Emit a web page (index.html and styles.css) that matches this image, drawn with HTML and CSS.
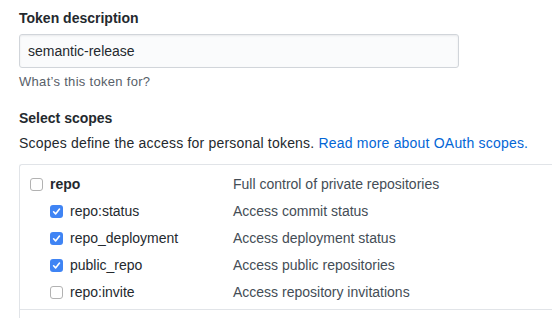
FILE: index.html
```html
<!DOCTYPE html>
<html lang="en">
<head>
<meta charset="UTF-8">
<meta name="viewport" content="width=device-width, initial-scale=1.0">
<title>New personal access token</title>
<link rel="stylesheet" href="styles.css">
</head>
<body>
<form class="token-form">
<div class="form-group">
<label class="form-label" for="tokenDescription">Token description</label>
<input id="tokenDescription" class="form-control" type="text" value="semantic-release">
<p class="note">What’s this token for?</p>
</div>

<div class="form-group">
<div class="form-label">Select scopes</div>
<p class="scopes-intro">Scopes define the access for personal tokens. <a href="#">Read more about OAuth scopes.</a></p>

<div class="token-scopes">
<div class="scope-group">
<label class="scope-row parent">
<span class="check"></span>
<span class="scope-name">repo</span>
<span class="scope-desc">Full control of private repositories</span>
</label>
<label class="scope-row child">
<span class="check checked"><svg viewBox="0 0 13 13"><path d="M3.6 6.8l2 2.1 3.9-4.8"/></svg></span>
<span class="scope-name">repo:status</span>
<span class="scope-desc">Access commit status</span>
</label>
<label class="scope-row child">
<span class="check checked"><svg viewBox="0 0 13 13"><path d="M3.6 6.8l2 2.1 3.9-4.8"/></svg></span>
<span class="scope-name">repo_deployment</span>
<span class="scope-desc">Access deployment status</span>
</label>
<label class="scope-row child">
<span class="check checked"><svg viewBox="0 0 13 13"><path d="M3.6 6.8l2 2.1 3.9-4.8"/></svg></span>
<span class="scope-name">public_repo</span>
<span class="scope-desc">Access public repositories</span>
</label>
<label class="scope-row child">
<span class="check"></span>
<span class="scope-name">repo:invite</span>
<span class="scope-desc">Access repository invitations</span>
</label>
</div>
<div class="scope-group next"></div>
</div>
</div>
</form>
</body>
</html>
```

FILE: styles.css
```css
html, body {
overflow: hidden;
}
body {
font-family: "Liberation Sans", Arial, sans-serif;
font-size: 14px;
line-height: 1.5;
color: #24292e;
margin: 0;
padding: 0 0 0 19px;
background: #fff;
}
.form-group {
margin: 0;
}
.form-label {
display: block;
font-weight: bold;
padding-top: 8px;
margin-bottom: 5px;
}
.form-control {
display: block;
box-sizing: border-box;
width: 440px;
height: 34px;
padding: 6px 8px;
font: inherit;
color: #24292e;
background-color: #fafbfc;
border: 1px solid #d1d5da;
border-radius: 3px;
box-shadow: inset 0 1px 2px rgba(27,31,35,0.075);
outline: none;
}
.note {
margin: 4px 0 0;
font-size: 13px;
letter-spacing: 0.3px;
color: #586069;
}
.form-group + .form-group .form-label {
padding-top: 16px;
margin-bottom: 4px;
}
.scopes-intro {
margin: 0 0 10px;
letter-spacing: 0.2px;
}
.scopes-intro a {
color: #0366d6;
text-decoration: none;
}
.token-scopes {
border: 1px solid #e1e4e8;
border-right: none;
border-bottom: none;
border-radius: 3px 0 0 0;
}
.scope-group {
padding: 7px 0 4px 10px;
border-bottom: 1px solid #e1e4e8;
}
.scope-group.next {
height: 8px;
padding: 0;
border-bottom: none;
}
.scope-row {
display: flex;
align-items: center;
height: 26.8px;
}
.scope-row.child {
padding-left: 20px;
}
.scope-row.parent .scope-name {
width: 183px;
font-weight: bold;
}
.scope-row.child .scope-name {
width: 163px;
}
.scope-desc {
color: #444d56;
}
.check {
box-sizing: border-box;
width: 13px;
height: 13px;
margin-right: 7px;
border: 1px solid #b2b2b2;
border-radius: 3px;
background: #fff;
flex: none;
}
.check.checked {
border: none;
background: #3f84f4;
}
.check svg {
display: block;
width: 13px;
height: 13px;
fill: none;
stroke: #fff;
stroke-width: 1.6;
stroke-linecap: round;
stroke-linejoin: round;
}
```
